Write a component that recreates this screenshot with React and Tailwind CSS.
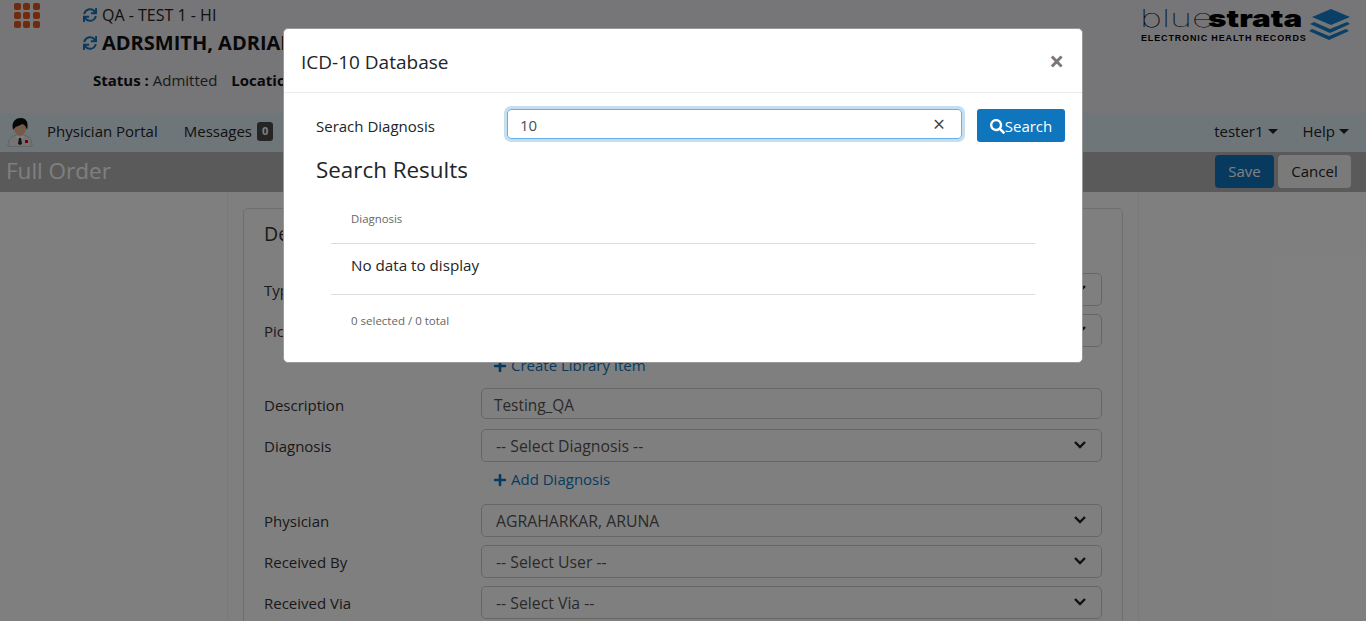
import { FaSync, FaSearch, FaPlus } from "react-icons/fa";

const font = { fontFamily: '"Open Sans", "Noto Sans", sans-serif' };

function Chevron() {
  return (
    <svg width="14" height="10" viewBox="0 0 14 10" className="shrink-0 -mt-[2px]">
      <path d="M2 2l5 5 5-5" fill="none" stroke="#222" strokeWidth="2.4" />
    </svg>
  );
}

function AppGrid() {
  const cells = [0, 1, 2, 3, 4, 5, 6, 7, 8];
  return (
    <div className="grid grid-cols-3 gap-[2px] w-[26px]">
      {cells.map((c) => (
        <div key={c} className="w-[7px] h-[7px] rounded-[2px] bg-[#e0561c]" />
      ))}
    </div>
  );
}

function Avatar() {
  return (
    <svg width="26" height="29" viewBox="0 0 26 29">
      <path d="M1 28c0-7 3-10 9-11h6c6 1 9 4 9 11-4 1-20 1-24 0z" fill="#e8e8e8" stroke="#c4c4c4" />
      <path d="M10 17l3 3 3-3 1 2-3 2 1 6h-4l1-6-3-2z" fill="#fff" />
      <path d="M12 20h2l1 6-2 1-2-1z" fill="#222" />
      <ellipse cx="13" cy="10" rx="6" ry="7.5" fill="#e9b48e" />
      <path d="M6 12C4 3 9 0 14 0s8 4 6 12c-1-4-3-6-5-6-2 2-7 2-9 6z" fill="#0c0c0c" />
      <rect x="18" y="22" width="3" height="3" fill="#e00000" />
    </svg>
  );
}

function Logo() {
  return (
    <div className="flex items-start">
      <div className="flex flex-col w-[164px]">
        <div className="text-[24px] leading-[24px] text-black whitespace-nowrap origin-left scale-x-[1.31] -ml-[1px]" style={{ fontFamily: "Inter, sans-serif" }}>
          <span className="inline-block w-[52px] font-thin origin-left scale-x-[1.2]">blue</span>
          <span className="font-black">strata</span>
        </div>
        <div className="text-[9px] leading-[10px] mt-[2px] font-bold tracking-[0.85px] text-black whitespace-nowrap" style={{ fontFamily: '"Liberation Sans", sans-serif' }}>
          ELECTRONIC HEALTH RECORDS
        </div>
      </div>
      <svg width="44" height="34" viewBox="0 0 44 34" className="ml-[2px] mt-[1px]">
        <path d="M24 1l19 8-19 8-19-8z" fill="#147ecc" />
        <path d="M7 14l16 7 17-7 3 2-20 9-20-9z" fill="#147ecc" />
        <path d="M5 21l17 7 17-7 3 2-20 9-20-9z" fill="#147ecc" />
      </svg>
    </div>
  );
}

function Row({ label, value, chevron = true, tall = true }) {
  return (
    <div className="flex items-center">
      <div className={`w-[217px] text-[15px] text-[#333] ${tall ? "pt-[2px]" : "pt-[4px]"}`}>{label}</div>
      <div className={`flex-1 flex items-center justify-between border border-[#ccc] rounded-[5px] bg-white pr-[14px] text-[#555] ${tall ? "h-[33px] pl-[14px] text-[15.8px]" : "h-[31px] pl-[12px] text-[15.4px]"}`}>
        <span className={tall ? "pt-[2px]" : "pt-[4px]"}>{value}</span>
        {chevron && <Chevron />}
      </div>
    </div>
  );
}

function AddLink({ children }) {
  return (
    <div className="pl-[229px] pb-[1px] flex items-center gap-[4px] h-[20px] text-[15px] text-[#0f75bc]">
      <FaPlus className="w-[14px] h-[14px]" />
      <span>{children}</span>
    </div>
  );
}

export default function App() {
  return (
    <div className="relative h-screen overflow-hidden bg-white" style={font}>
      {/* Patient header */}
      <header className="h-[113px] bg-[#ecebf0] flex justify-between">
        <div className="flex">
          <div className="pl-[14px] pt-[3px] w-[83px]">
            <AppGrid />
          </div>
          <div>
            <div className="flex items-center gap-[5px] pt-[3px] h-[27px] text-[16px] text-[#222] whitespace-nowrap">
              <FaSync className="w-[14px] h-[14px] text-[#0f75bc]" /> QA - TEST 1 - HI
            </div>
            <div className="flex items-center gap-[5px] h-[32px] text-[20px] font-bold text-[#111] whitespace-nowrap">
              <FaSync className="w-[14px] h-[14px] text-[#0f75bc]" /> ADRSMITH, ADRIAN
            </div>
            <div className="pl-[10px] pt-[10px] text-[15px] text-[#333] whitespace-nowrap">
              <b className="text-[#111]">Status :</b> Admitted <b className="ml-[10px] text-[#111]">Location :</b>
            </div>
          </div>
        </div>
        <div className="pr-[15px] pt-[7px]">
          <Logo />
        </div>
      </header>

      {/* Main nav */}
      <nav className="h-[39px] bg-[#deecf5] flex items-center justify-between pb-[2px] text-[15px] text-[#222]">
        <div className="flex items-center">
          <div className="pl-[7px] w-[47px] pt-[2px]">
            <Avatar />
          </div>
          <span>Physician Portal</span>
          <span className="ml-[26px]">Messages</span>
          <span className="ml-[5px] bg-[#4a4a4a] text-white text-[11px] font-bold rounded-[3px] px-[5px] py-[1px]">0</span>
        </div>
        <div className="flex items-center pr-[17px]">
          <span>tester1</span>
          <span className="ml-[4px] border-x-[5px] border-x-transparent border-t-[5px] border-t-[#222]" />
          <span className="ml-[25px]">Help</span>
          <span className="ml-[4px] border-x-[5px] border-x-transparent border-t-[5px] border-t-[#222]" />
        </div>
      </nav>

      {/* Page title */}
      <div className="h-[40px] bg-[#b4b4b4] flex items-center justify-between pl-[6px] pr-[15px] pb-[1px]">
        <h1 className="text-[22.5px] text-white pb-[1px]">Full Order</h1>
        <div className="flex gap-[4px]">
          <button className="w-[59px] h-[33px] rounded-[4px] bg-[#0f75bc] text-white text-[15px]">Save</button>
          <button className="w-[73px] h-[33px] rounded-[4px] bg-[#f5f5f5] text-[#222] text-[15px]">Cancel</button>
        </div>
      </div>

      {/* Order form */}
      <div className="mx-[227px] px-[15px] pt-[16px] border-x border-[#f2f2f2]">
        <div className="border border-[#ddd] rounded-[5px] pl-[20px] pr-[20px] pt-[10px] pb-[20px]">
          <h2 className="text-[19.5px] text-[#333] h-[54px]">Details</h2>
          <div className="flex flex-col">
            <Row label="Type" value="" />
            <div className="h-[8px]" />
            <Row label="Pick List" value="" />
            <div className="h-[9px]" />
            <AddLink>Create Library Item</AddLink>
            <div className="h-[12px]" />
            <Row label="Description" value="Testing_QA" chevron={false} tall={false} />
            <div className="h-[10px]" />
            <Row label="Diagnosis" value="-- Select Diagnosis --" />
            <div className="h-[8px]" />
            <AddLink>Add Diagnosis</AddLink>
            <div className="h-[14px]" />
            <Row label="Physician" value="AGRAHARKAR, ARUNA" />
            <div className="h-[8px]" />
            <Row label="Received By" value="-- Select User --" />
            <div className="h-[8px]" />
            <Row label="Received Via" value="-- Select Via --" />
          </div>
        </div>
      </div>

      {/* Modal backdrop */}
      <div className="absolute inset-0 bg-black/50 flex justify-center items-start pt-[28px]">
        <div className="w-[800px] h-[335px] bg-white rounded-[5px] border border-[#999]">
          <div className="h-[64px] border-b border-[#e9ecef] flex items-center justify-between pl-[17px] pr-[18px]">
            <h3 className="text-[19px] text-[#212529] pt-[3px]">ICD-10 Database</h3>
            <span className="text-[26px] font-bold text-[#777] leading-none">×</span>
          </div>
          <div className="pt-[16px]">
            <div className="flex items-start pl-[32px]">
              <div className="w-[191px] h-[33px] pt-[1px] flex items-center text-[15px] text-[#212529]">Serach Diagnosis</div>
              <div className="w-[455px] h-[30px] flex items-center justify-between pl-[12px] pr-[16px] rounded-[4px] border border-[#66afe9] ring-[3px] ring-[#c5dff1] text-[15px] text-[#495057]">
                <span className="pt-[3px]">10</span>
                <span className="text-[21px] leading-none text-[#444]">×</span>
              </div>
              <button className="ml-[15px] w-[88px] h-[33px] pt-[1px] rounded-[3px] bg-[#0f75bc] text-white text-[15px] flex items-center justify-center">
                <FaSearch className="w-[15px] h-[15px]" />Search
              </button>
            </div>
            <h4 className="pl-[32px] mt-[10px] text-[22.4px] leading-[36px] text-[#212529]">Search Results</h4>
            <div className="ml-[47px] w-[704px] mt-[6px]">
              <div className="h-[50px] border-b border-[#ddd] pl-[20px] flex items-center text-[11.4px] text-[#666]">Diagnosis</div>
              <div className="h-[51px] border-b border-[#ddd] pl-[20px] pb-[8px] flex items-center text-[15.2px] text-[#212529]">No data to display</div>
              <div className="h-[52px] pl-[20px] flex items-center text-[11.5px] text-[#666]">0 selected / 0 total</div>
            </div>
          </div>
        </div>
      </div>
    </div>
  );
}
